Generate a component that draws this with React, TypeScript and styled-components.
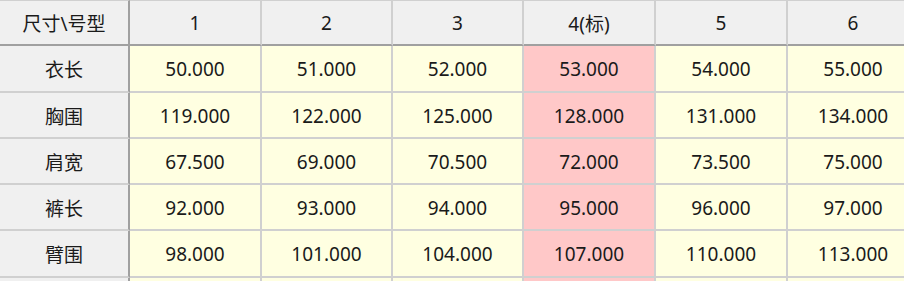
import React from 'react'
import styled, { createGlobalStyle } from 'styled-components'

const GlobalStyle = createGlobalStyle`
  html, body {
    margin: 0;
    padding: 0;
    background: #ffffff;
    overflow: hidden;
  }
  body {
    font-family: "Noto Sans", "Noto Sans CJK SC", sans-serif;
  }
`

const Grid = styled.div`
  display: grid;
  grid-template-columns: 130px 132px 131px 131px 132px 132px 132px;
  grid-template-rows: 46px 47px 46px 46px 46px 47px 46px;
  width: max-content;
  color: #1a1a1a;
  font-size: 19px;
`

const Cell = styled.div<{ $head?: boolean; $side?: boolean; $std?: boolean }>`
  display: flex;
  align-items: center;
  justify-content: center;
  box-sizing: border-box;
  white-space: nowrap;
  background: ${(p) =>
    p.$head || p.$side ? '#f0f0f0' : p.$std ? '#ffc8c8' : '#ffffe1'};
  border-right: 2px solid ${(p) => (p.$side ? '#a0a0a0' : '#d0d0d0')};
  border-bottom: 2px solid ${(p) => (p.$head ? '#a0a0a0' : '#d0d0d0')};
  border-top: ${(p) => (p.$head ? '1px solid #d0d0d0' : 'none')};
  padding-top: ${(p) => (p.$head ? '0' : '1px')};
`

const sizes = ['1', '2', '3', '4(标)', '5', '6']
const stdIndex = 3

const rows = [
  { name: '衣长', values: [50, 51, 52, 53, 54, 55] },
  { name: '胸围', values: [119, 122, 125, 128, 131, 134] },
  { name: '肩宽', values: [67.5, 69, 70.5, 72, 73.5, 75] },
  { name: '裤长', values: [92, 93, 94, 95, 96, 97] },
  { name: '臂围', values: [98, 101, 104, 107, 110, 113] },
  { name: '腰围', values: [70, 72, 74, 76, 78, 80] }
]

const App: React.FC = () => {
  return (
    <>
      <GlobalStyle />
      <Grid>
        <Cell $head $side>
          尺寸\号型
        </Cell>
        {sizes.map((s) => (
          <Cell key={s} $head>
            {s}
          </Cell>
        ))}
        {rows.map((row) => (
          <React.Fragment key={row.name}>
            <Cell $side>{row.name}</Cell>
            {row.values.map((v, i) => (
              <Cell key={i} $std={i === stdIndex}>
                {v.toFixed(3)}
              </Cell>
            ))}
          </React.Fragment>
        ))}
      </Grid>
    </>
  )
}

export default App
